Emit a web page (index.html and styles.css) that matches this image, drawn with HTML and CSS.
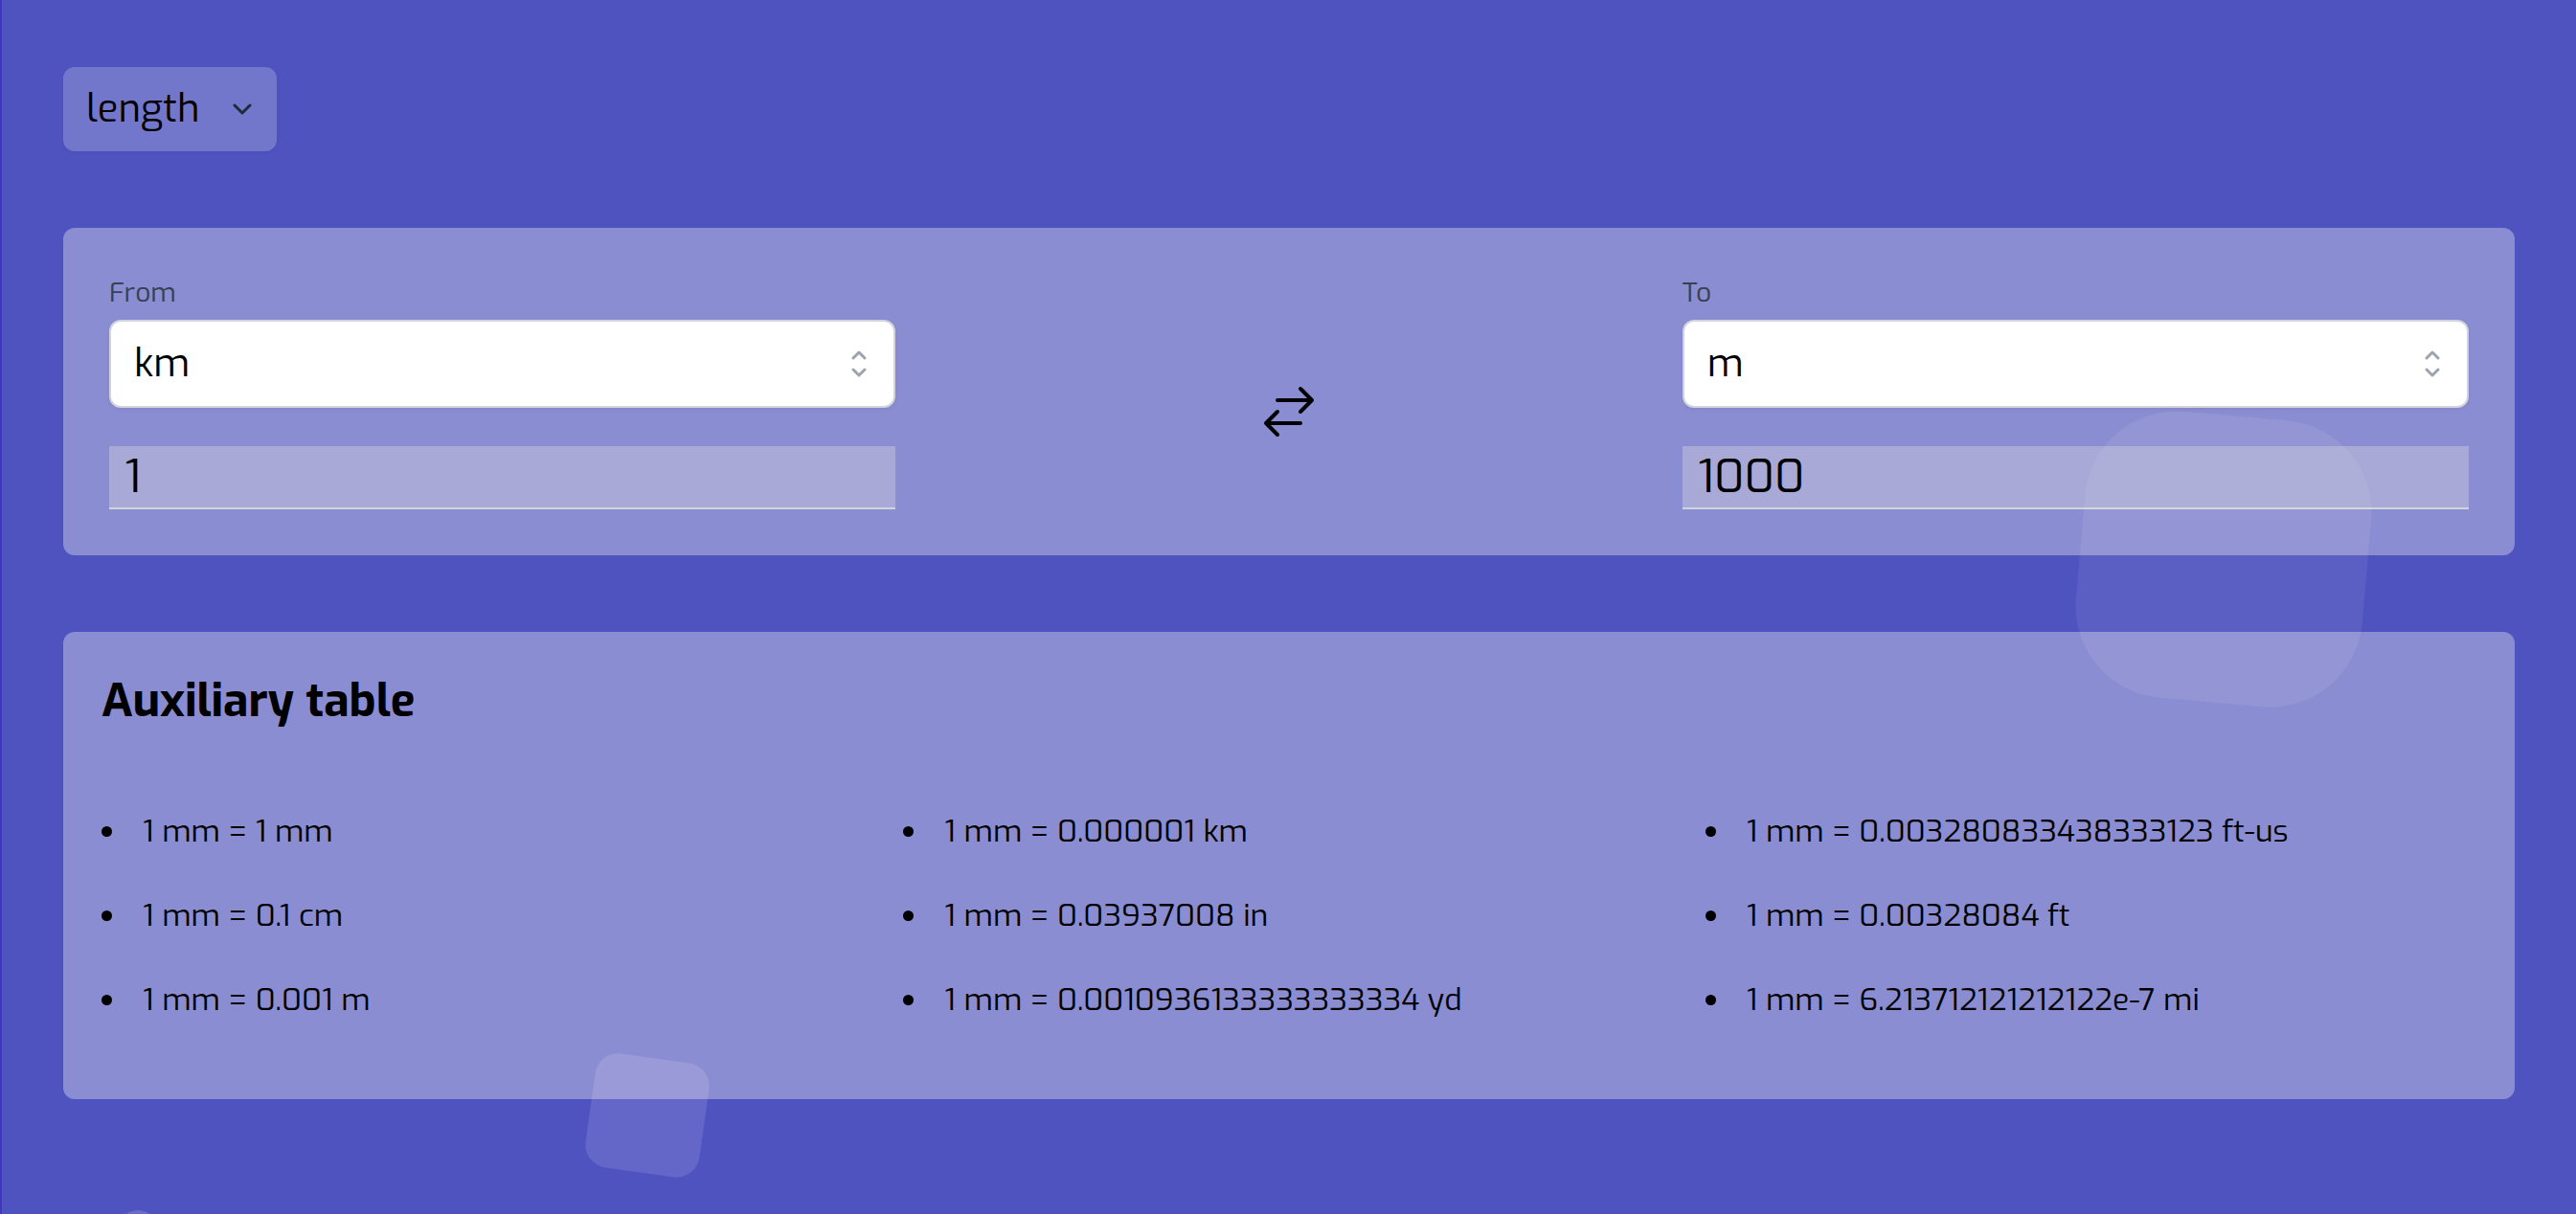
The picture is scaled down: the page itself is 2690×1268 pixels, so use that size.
FILE: index.html
```
<!DOCTYPE html>
<html lang="en">
<head>
<meta charset="utf-8">
<title>Unit converter</title>
<link rel="stylesheet" href="styles.css">
</head>
<body>
<main class="page">
  <button class="category" type="button">
    <span>length</span>
    <svg class="category-icon" viewBox="0 0 20 12" fill="none" stroke="currentColor" stroke-width="3" stroke-linecap="round" stroke-linejoin="round" aria-hidden="true"><path d="M2 2l8 8 8-8"/></svg>
  </button>

  <section class="panel converter">
    <div class="side">
      <label class="label" for="from-unit">From</label>
      <div class="picker">
        <select class="select" id="from-unit"><option>km</option><option>m</option></select>
        <svg class="picker-icon" viewBox="0 0 20 20" fill="none" stroke="currentColor" stroke-width="1.5" stroke-linecap="round" stroke-linejoin="round" aria-hidden="true"><path d="M7 7l3-3 3 3m0 6l-3 3-3-3"/></svg>
      </div>
      <input class="amount" type="text" value="1" aria-label="Amount to convert">
    </div>
    <button class="swap" type="button" aria-label="Swap units">
      <svg class="swap-icon" viewBox="0 0 72 72" fill="none" stroke="currentColor" stroke-width="4" stroke-linecap="round" stroke-linejoin="round" aria-hidden="true"><path d="M24 24h36M48 12l12 12-12 12M48 48H12M24 36L12 48l12 12"/></svg>
    </button>
    <div class="side">
      <label class="label" for="to-unit">To</label>
      <div class="picker">
        <select class="select" id="to-unit"><option>m</option><option>km</option></select>
        <svg class="picker-icon" viewBox="0 0 20 20" fill="none" stroke="currentColor" stroke-width="1.5" stroke-linecap="round" stroke-linejoin="round" aria-hidden="true"><path d="M7 7l3-3 3 3m0 6l-3 3-3-3"/></svg>
      </div>
      <input class="amount" type="text" value="1000" aria-label="Converted amount">
    </div>
  </section>

  <section class="panel auxiliary">
    <h2 class="title">Auxiliary table</h2>
    <ul class="facts">
      <li>1 mm = 1 mm</li>
      <li>1 mm = 0.1 cm</li>
      <li>1 mm = 0.001 m</li>
      <li>1 mm = 0.000001 km</li>
      <li>1 mm = 0.03937008 in</li>
      <li>1 mm = 0.0010936133333333334 yd</li>
      <li>1 mm = 0.003280833438333123 ft-us</li>
      <li>1 mm = 0.00328084 ft</li>
      <li>1 mm = 6.213712121212122e-7 mi</li>
    </ul>
  </section>

  <div class="shape shape-large"></div>
  <div class="shape shape-medium"></div>
  <div class="shape shape-small"></div>
</main>
</body>
</html>
```
FILE: styles.css
```
*,
*::before,
*::after {
  box-sizing: border-box;
}

body {
  margin: 0;
  font-family: Exo, "Exo 2", Roboto, sans-serif;
  color: #000;
  background: #4f53c0;
}

button,
input,
select {
  font: inherit;
  color: inherit;
}

.page {
  position: relative;
  display: flex;
  flex-direction: column;
  align-items: flex-start;
  gap: 80px;
  min-height: 100vh;
  padding: 70px 64px 80px;
  overflow: hidden;
  border-left: 2px solid #4136c0;
}

.category {
  display: flex;
  align-items: center;
  justify-content: space-between;
  gap: 34px;
  height: 88px;
  padding: 0 26px 0 24px;
  border: 0;
  border-radius: 12px;
  background: #7377cb;
  font-size: 40px;
  line-height: 56px;
  box-shadow: 0 2px 4px rgba(0, 0, 0, 0.05);
}

.category-icon {
  width: 20px;
  height: 12px;
  color: #1f2937;
}

.panel {
  width: 100%;
  border-radius: 12px;
  background: #8b8dd2;
}

.converter {
  display: grid;
  grid-template-columns: repeat(3, 1fr);
  align-items: center;
  padding: 48px;
}

.side {
  display: flex;
  flex-direction: column;
}

.label {
  margin-bottom: 8px;
  font-size: 28px;
  line-height: 40px;
  color: #374151;
}

.picker {
  display: grid;
  align-items: center;
  margin-bottom: 40px;
}

.select,
.picker-icon {
  grid-area: 1 / 1;
}

.select {
  width: 100%;
  height: 92px;
  padding: 0 24px 2px;
  border: 2px solid #d1d5db;
  border-radius: 12px;
  appearance: none;
  background: #fff;
  font-size: 40px;
  box-shadow: 0 2px 4px rgba(0, 0, 0, 0.05);
}

.picker-icon {
  justify-self: end;
  width: 40px;
  height: 40px;
  margin-right: 18px;
  color: #9ca3af;
  pointer-events: none;
}

.amount {
  width: 100%;
  height: 66px;
  padding: 0 16px;
  border: 0;
  border-bottom: 2px solid #d1d5db;
  border-radius: 0;
  background: #a8a9d7;
  font-size: 48px;
}

.swap {
  display: flex;
  justify-self: center;
  padding: 42px 0 0;
  border: 0;
  background: none;
}

.swap-icon {
  width: 72px;
  height: 72px;
}

.auxiliary {
  padding: 40px 40px 76px;
}

.title {
  margin: 0 0 76px;
  font-size: 48px;
  font-weight: 700;
  line-height: 64px;
}

.facts {
  display: grid;
  grid-template-rows: repeat(3, 56px);
  grid-auto-flow: column;
  grid-auto-columns: 1fr;
  gap: 32px;
  margin: 0;
  padding: 0;
  list-style: none;
  font-size: 32px;
  line-height: 56px;
}

.facts li {
  display: flex;
  align-items: center;
  gap: 32px;
}

.facts li::before {
  content: "";
  width: 11px;
  height: 11px;
  border-radius: 50%;
  background: #000;
}

.shape {
  position: absolute;
  pointer-events: none;
}

.shape-large {
  top: 434px;
  right: 218px;
  width: 300px;
  height: 300px;
  border-radius: 96px;
  background: rgba(255, 255, 255, 0.07);
  transform: rotate(5deg);
}

.shape-medium {
  top: 1105px;
  left: 614px;
  width: 120px;
  height: 120px;
  border-radius: 24px;
  background: rgba(255, 255, 255, 0.12);
  transform: rotate(8deg);
}

.shape-small {
  top: 1264px;
  left: 122px;
  width: 40px;
  height: 40px;
  border-radius: 50%;
  background: rgba(255, 255, 255, 0.15);
}
```
